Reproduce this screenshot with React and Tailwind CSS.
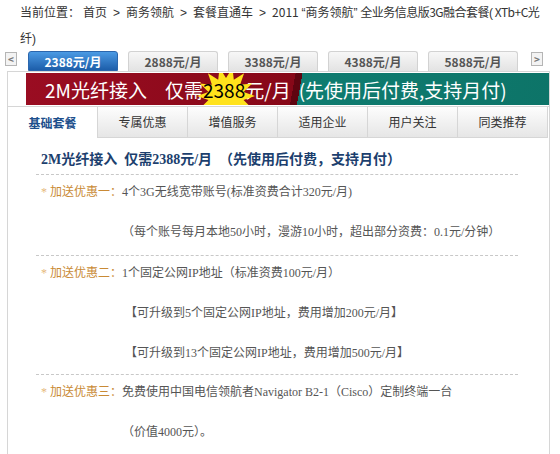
import { Fragment } from 'react'

const cjk = { fontFamily: '"Noto Sans CJK SC", "Noto Sans", sans-serif' }
const body = { fontFamily: '"Liberation Serif", "Noto Sans CJK SC", serif' }
const narrow = { fontFamily: '"Liberation Sans", sans-serif' }

const priceTabs = ['2388元/月', '2888元/月', '3388元/月', '4388元/月', '5888元/月']
const infoTabs = ['基础套餐', '专属优惠', '增值服务', '适用企业', '用户关注', '同类推荐']
const crumbs = ['首页', '商务领航', '套餐直通车']

function Burst() {
  const pts = []
  const n = 14
  for (let i = 0; i < n * 2; i++) {
    const r = i % 2 === 0 ? 29 : 18
    const a = (Math.PI * i) / n
    pts.push(`${30 + r * Math.cos(a)},${30 + r * Math.sin(a)}`)
  }
  return (
    <svg viewBox="0 0 60 60" className="absolute left-[-7px] top-[-14px] w-[60px] h-[60px]">
      <polygon points={pts.join(' ')} fill="#ffe21c" />
    </svg>
  )
}

function Label({ n }) {
  return (
    <span className="text-[#c98a35]">
      <span className="text-[#e6b77a]">*</span> 加送优惠{n}：
    </span>
  )
}

function Sep() {
  return <span className="mx-[6px]" style={narrow}>&gt;</span>
}

export default function App() {
  return (
    <div className="w-[560px] h-[454px] overflow-hidden bg-white text-[12px]" style={cjk}>
      <div className="pl-[20px] leading-[23.5px] text-[#333] whitespace-nowrap">
        当前位置：<span className="ml-[3px]" />
        {crumbs.map((c) => (
          <Fragment key={c}>
            {c}
            <Sep />
          </Fragment>
        ))}
        2011 <span style={narrow}>“</span>商务领航<span style={narrow}>”</span>{' '}
        <span className="tracking-[-0.5px]">
          全业务信息版3G融合套餐<span style={narrow}>(</span> XTb+C光
        </span>
        <br />
        纤<span style={narrow}>)</span>
      </div>

      <div className="flex items-start h-[20px] pl-[5px]">
        <button className="mt-[1px] w-[12px] h-[14px] border border-[#b5b5b5] bg-[#f3f3f3] text-[#777] text-[10px] leading-[12px] font-bold">
          &lt;
        </button>
        <div className="flex gap-[10px] ml-[11px]">
          {priceTabs.map((t, i) => (
            <div
              key={t}
              className={
                i === 0
                  ? 'w-[90px] h-[20px] rounded-t-[3px] border border-[#2b66ad] bg-gradient-to-b from-[#4b9ae4] to-[#1d5eaa] text-white font-bold text-center leading-[19px]'
                  : 'w-[90px] h-[20px] rounded-t-[3px] border border-[#d2d2d2] border-b-0 bg-gradient-to-b from-[#f7f7f7] to-[#e3e3e3] text-[#555] font-bold text-center leading-[19px]'
              }
            >
              {t}
            </div>
          ))}
        </div>
        <button className="ml-[13px] mt-[1px] w-[12px] h-[14px] border border-[#b5b5b5] bg-[#f3f3f3] text-[#777] text-[10px] leading-[12px] font-bold">
          &gt;
        </button>
      </div>

      <div className="ml-[7px] w-[543px] border-l border-r border-t border-[#d6d6d6] h-[400px]">
        <div className="ml-[18px] mt-[1px] h-[32px] overflow-hidden flex items-center text-white text-[19px] leading-none bg-[linear-gradient(100deg,#9a0d22_0%,#870818_51%,#5f0410_51%,#5f0410_52.3%,#0f7c70_52.3%,#0d7468_100%)]">
          <span className="ml-[19px]">2M光纤接入</span>
          <span className="ml-[18px]">仅需</span>
          <span className="relative text-black">
            <Burst />
            <span className="relative">2388</span>
          </span>
          <span>元/月</span>
          <span className="ml-[8px]">(先使用后付费,支持月付)</span>
        </div>

        <div className="flex mt-[1px] h-[32px] border-t border-[#d6d6d6]">
          {infoTabs.map((t, i) => (
            <div
              key={t}
              className={
                i === 0
                  ? 'w-[90px] bg-white text-[#1d4f8c] font-bold text-center leading-[31px] border-r border-[#d6d6d6]'
                  : 'w-[90px] bg-gradient-to-b from-[#fdfdfd] to-[#e6e6e6] text-[#333] text-center leading-[30px] border-r border-b border-[#d6d6d6]'
              }
            >
              {t}
            </div>
          ))}
        </div>

        <div className="pl-[28px] pr-[31px] pt-[8px]" style={body}>
          <div className="pl-[5px] h-[29px] leading-[27px] text-[14px] font-bold text-[#1c3f6e] border-b border-dashed border-[#c8c8c8]">
            2M光纤接入&nbsp; 仅需2388元/月 &nbsp;（先使用后付费，支持月付）
          </div>

          <div className="pl-[5px] h-[81px] border-b border-dashed border-[#c8c8c8] text-[#555] leading-[35px]">
            <div className="h-[40px]">
              <Label n="一" />4个3G无线宽带账号(标准资费合计320元/月)
            </div>
            <div className="h-[40px] pl-[81px]">（每个账号每月本地50小时，漫游10小时，超出部分资费：0.1元/分钟）</div>
          </div>

          <div className="pl-[5px] h-[119px] border-b border-dashed border-[#c8c8c8] text-[#555] leading-[35px]">
            <div className="h-[40px]">
              <Label n="二" />1个固定公网IP地址（标准资费100元/月）
            </div>
            <div className="h-[40px] pl-[84px]">【可升级到5个固定公网IP地址，费用增加200元/月】</div>
            <div className="h-[38px] pl-[84px]">【可升级到13个固定公网IP地址，费用增加500元/月】</div>
          </div>

          <div className="pl-[5px] h-[81px] border-b border-dashed border-[#c8c8c8] text-[#555] leading-[35px]">
            <div className="h-[40px]">
              <Label n="三" />免费使用中国电信领航者Navigator B2-1（Cisco）定制终端一台
            </div>
            <div className="h-[40px] pl-[81px]">（价值4000元）。</div>
          </div>
        </div>
      </div>
    </div>
  )
}
